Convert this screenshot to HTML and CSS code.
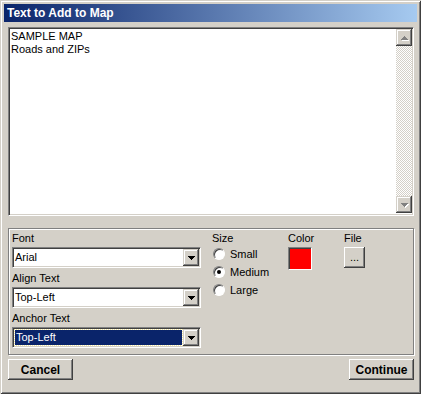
FILE: index.html
```html
<!DOCTYPE html>
<html>
  <head>
    <meta charset="utf-8">
    <title>Text to Add to Map</title>
    <link rel="stylesheet" href="styles.css">
  </head>
  <body>
    <div class="window">
      <div class="titlebar">Text to Add to Map</div>
      <div class="content">
        <div class="memo">
          <div class="memo-text">SAMPLE MAP<br>Roads and ZIPs</div>
          <div class="scrollbar">
            <div class="sb-btn">
              <svg width="7" height="4" viewBox="0 0 7 4"><path d="M3 0h1v1h1v1h1v1h1v1H0V3h1V2h1V1h1z" fill="#808080"/></svg>
            </div>
            <div class="sb-track"></div>
            <div class="sb-btn">
              <svg width="7" height="4" viewBox="0 0 7 4"><path d="M0 0h7v1H6v1H5v1H4v1H3V3H2V2H1V1H0z" fill="#808080"/></svg>
            </div>
          </div>
        </div>

        <div class="group">
          <div class="col-left">
            <div class="lbl">Font</div>
            <div class="select">
              <span class="sel-text">Arial</span>
              <span class="dd-btn"><svg width="7" height="4" viewBox="0 0 7 4"><path d="M0 0h7v1H6v1H5v1H4v1H3V3H2V2H1V1H0z" fill="#000"/></svg></span>
            </div>
            <div class="lbl">Align Text</div>
            <div class="select">
              <span class="sel-text">Top-Left</span>
              <span class="dd-btn"><svg width="7" height="4" viewBox="0 0 7 4"><path d="M0 0h7v1H6v1H5v1H4v1H3V3H2V2H1V1H0z" fill="#000"/></svg></span>
            </div>
            <div class="lbl">Anchor Text</div>
            <div class="select focused">
              <span class="sel-text"><span class="hl">Top-Left</span></span>
              <span class="dd-btn"><svg width="7" height="4" viewBox="0 0 7 4"><path d="M0 0h7v1H6v1H5v1H4v1H3V3H2V2H1V1H0z" fill="#000"/></svg></span>
            </div>
          </div>

          <div class="col-size">
            <div class="lbl">Size</div>
            <div class="radios">
              <div class="radio"><span class="circle"></span>Small</div>
              <div class="radio"><span class="circle on"></span>Medium</div>
              <div class="radio"><span class="circle"></span>Large</div>
            </div>
          </div>

          <div class="col-color">
            <div class="lbl">Color</div>
            <div class="swatch"></div>
          </div>

          <div class="col-file">
            <div class="lbl">File</div>
            <div class="btn small">...</div>
          </div>
        </div>

        <div class="actions">
          <div class="btn wide">Cancel</div>
          <div class="btn wide">Continue</div>
        </div>
      </div>
    </div>
  </body>
</html>
```

FILE: styles.css
```css
body, html { margin: 0; padding: 0; background: #d4d0c8; }
body { font-family: "Liberation Sans", Arial, sans-serif; font-size: 11px; color: #000; }

.window {
  width: 421px; height: 394px; box-sizing: border-box; padding: 4px;
  background: #d4d0c8;
  box-shadow: inset 1px 1px #d4d0c8, inset -1px -1px #404040, inset 2px 2px #fff, inset -2px -2px #808080;
}
.titlebar {
  height: 18px; line-height: 18px; padding-left: 3px;
  background: linear-gradient(to right, #0a246a, #a6caf0);
  color: #fff; font-weight: bold; font-size: 12px;
}
.content { padding: 5px 3px 0 4px; }

/* memo box */
.memo {
  height: 189px; box-sizing: border-box; display: flex; background: #fff;
  border: 1px solid; border-color: #808080 #fff #fff #808080;
  box-shadow: inset 1px 1px #404040, inset -1px -1px #d4d0c8;
  padding: 1px 1px 2px 1px;
}
.memo-text { flex: 1; padding: 1px 0 0 1px; line-height: 13px; }
.scrollbar { width: 16px; display: flex; flex-direction: column; }
.sb-btn {
  width: 16px; height: 17px; box-sizing: border-box; background: #d4d0c8;
  display: flex; align-items: center; justify-content: center;
  box-shadow: inset -1px -1px #404040, inset 1px 1px #d4d0c8, inset -2px -2px #808080, inset 2px 2px #fff;
}
.sb-btn svg { filter: drop-shadow(1px 1px 0 #fff); }
.sb-track { flex: 1; background: repeating-conic-gradient(#fff 0 25%, #d4d0c8 0 50%) 0 0 / 2px 2px; }

/* options group */
.group {
  margin-top: 12px; height: 127px; box-sizing: border-box;
  border: 1px solid #808080; box-shadow: inset 1px 1px #fff, 1px 1px #fff;
  padding: 1px 3px; display: flex;
}
.lbl { line-height: 14px; padding: 1px 0 2px; }
.col-left { width: 189px; margin-right: 11px; }
.col-size { width: 76px; }
.col-color { width: 56px; }

.select {
  height: 21px; box-sizing: border-box; display: flex; background: #fff;
  border: 1px solid; border-color: #808080 #fff #fff #808080;
  box-shadow: inset 1px 1px #404040, inset -1px -1px #d4d0c8;
  padding: 1px; margin-bottom: 2px;
}
.sel-text { flex: 1; line-height: 17px; padding-left: 1px; }
.focused .sel-text { padding: 1px; display: flex; }
.hl {
  flex: 1; background: #0a246a; color: #fff; line-height: 15px;
  outline: 1px dotted #f4e8a0; outline-offset: 0; padding-left: 1px;
}
.dd-btn {
  width: 16px; height: 17px; box-sizing: border-box; background: #d4d0c8;
  display: flex; align-items: center; justify-content: center;
  box-shadow: inset -1px -1px #404040, inset 1px 1px #d4d0c8, inset -2px -2px #808080, inset 2px 2px #fff;
}

.col-size .lbl { padding-bottom: 0; }
.radio { height: 18px; display: flex; align-items: center; gap: 5px; padding-left: 1px; }
.circle {
  width: 12px; height: 12px; box-sizing: border-box; border-radius: 50%;
  background: #fff; border: 1px solid; border-color: #808080 #fff #fff #808080;
  box-shadow: inset 1px 1px #404040; display: flex; align-items: center; justify-content: center;
}
.circle.on::after { content: ""; width: 4px; height: 4px; border-radius: 50%; background: #000; }

.swatch {
  width: 24px; height: 23px; box-sizing: border-box; background: #f00;
  border: 1px solid; border-color: #808080 #fff #fff #808080;
  box-shadow: inset 1px 1px #404040;
}

.btn {
  box-sizing: border-box; background: #d4d0c8; display: flex; align-items: center; justify-content: center;
  box-shadow: inset -1px -1px #404040, inset 1px 1px #fff, inset -2px -2px #808080;
}
.btn.small { width: 21px; height: 21px; padding-bottom: 2px; }
.btn.wide { width: 65px; height: 21px; font-weight: bold; font-size: 12px; }

.actions { margin-top: 4px; display: flex; justify-content: space-between; }
```
